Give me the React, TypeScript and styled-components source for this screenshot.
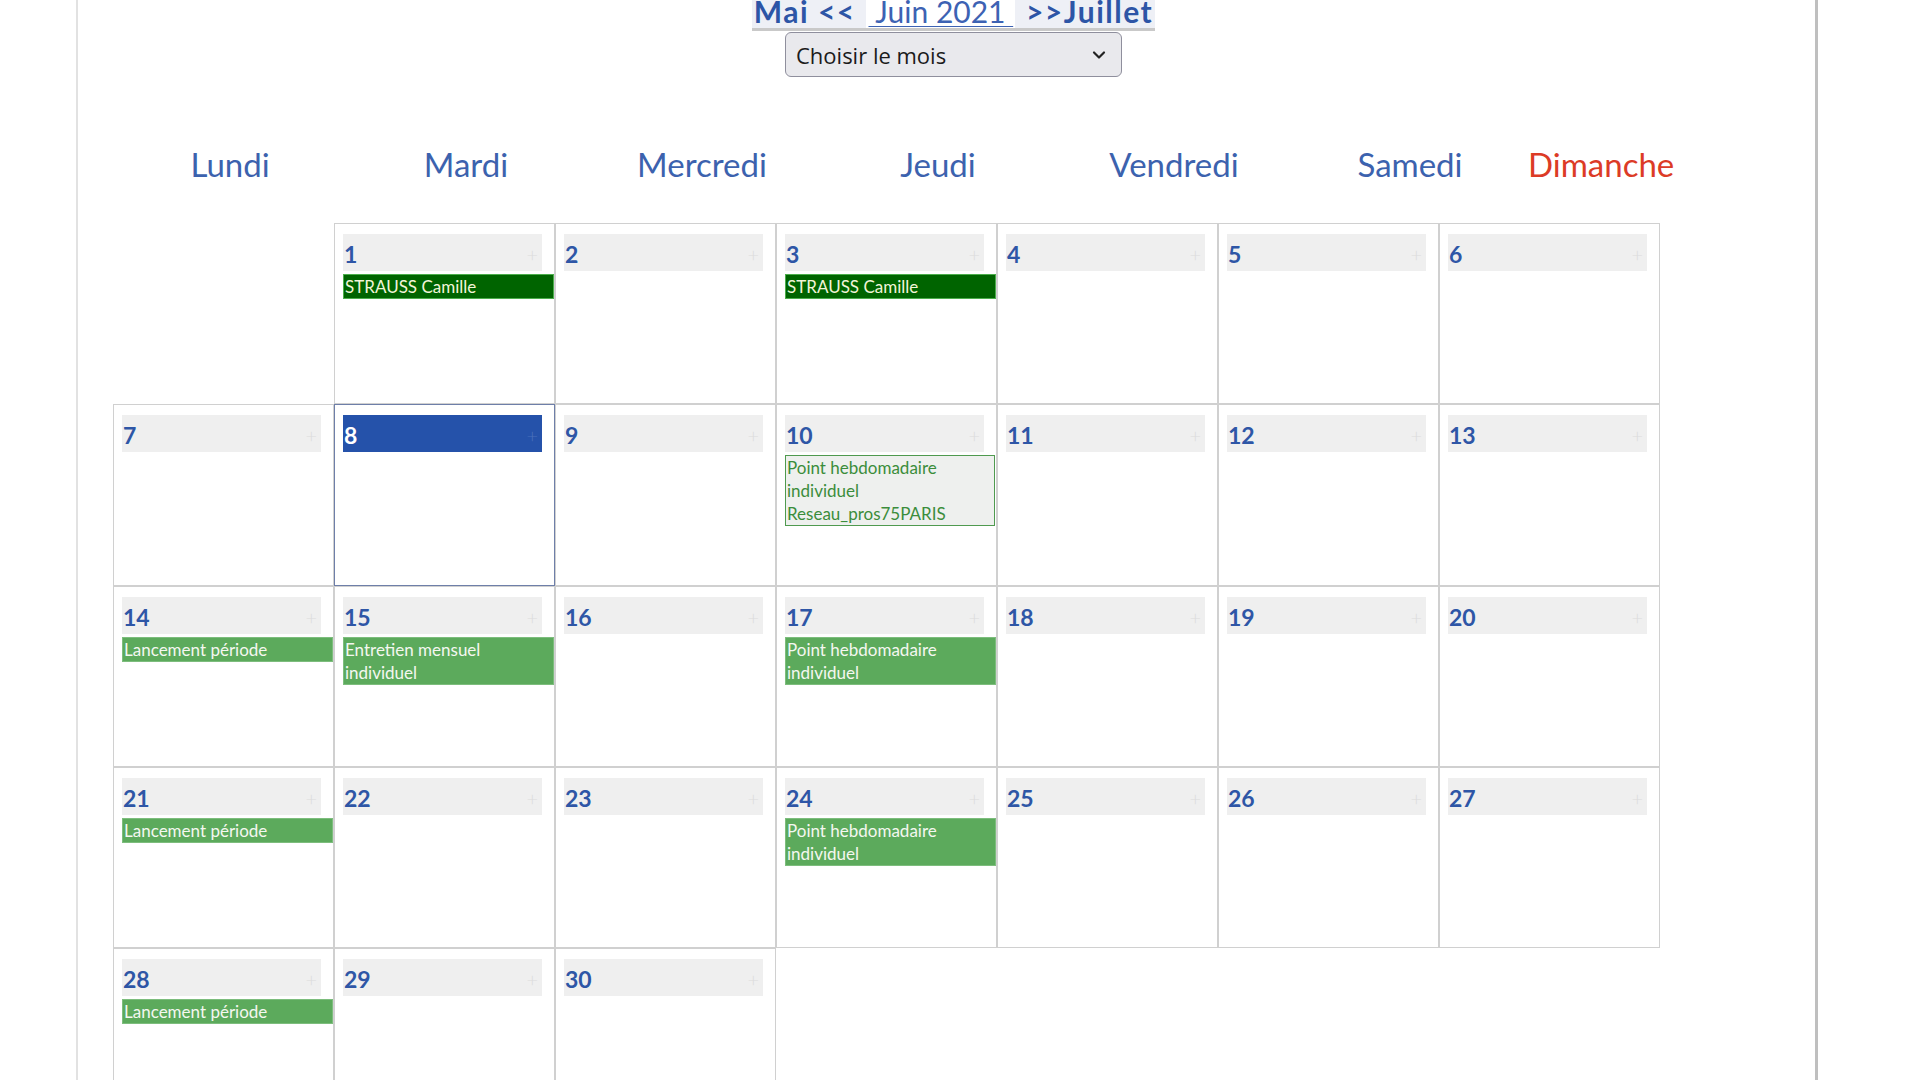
import styled, { createGlobalStyle } from "styled-components";
import { ChevronDown } from "lucide-react";

const GlobalStyle = createGlobalStyle`
  body {
    margin: 0;
    background: #ffffff;
    font-family: Lato, "Liberation Sans", sans-serif;
    overflow: hidden;
  }
`;

const Page = styled.div`
  box-sizing: border-box;
  margin-left: 76px;
  width: 1742px;
  min-height: 100vh;
  border-left: 2px solid #e2e2e2;
  border-right: 3px solid #bfbfbf;
`;

const Nav = styled.div`
  display: flex;
  flex-direction: column;
  align-items: center;
  padding-left: 14px;
  margin-top: -5px;
`;

const NavLine = styled.div`
  display: flex;
  border-bottom: 3px solid #c9c9c9;
  font-size: 30px;
  line-height: 1.1;
`;

const NavLink = styled.a<{ $current?: boolean }>`
  color: ${(p) => (p.$current ? "#3d62b3" : "#2d55a6")};
  font-weight: ${(p) => (p.$current ? 400 : 700)};
  letter-spacing: ${(p) => (p.$current ? "0" : "1.5px")};
  background: ${(p) => (p.$current ? "#ffffff" : "#eef0f6")};
  text-decoration: ${(p) => (p.$current ? "underline" : "none")};
  text-decoration-thickness: 1px;
  text-underline-offset: 3px;
  white-space: pre;
  padding: 0 2px;
`;

const SelectBox = styled.div`
  box-sizing: border-box;
  width: 337px;
  height: 45px;
  margin-top: 1px;
  display: flex;
  align-items: center;
  justify-content: space-between;
  padding: 0 12px 0 10px;
  background: #e9e9ed;
  border: 1px solid #8f8f9d;
  border-radius: 6px;
  font-family: "Open Sans", "Liberation Sans", sans-serif;
  font-size: 22px;
  color: #1b1b1b;
`;

const WeekHeader = styled.div`
  display: grid;
  grid-template-columns: repeat(7, 236px);
  margin: 59px 0 0 34px;
  height: 56px;
  align-items: center;
`;

const DayName = styled.div<{ $sunday?: boolean }>`
  font-size: 33px;
  text-align: ${(p) => (p.$sunday ? "left" : "center")};
  color: ${(p) => (p.$sunday ? "#dc3b26" : "#3c62ae")};
  white-space: nowrap;
`;

const Grid = styled.div`
  display: grid;
  grid-template-columns: repeat(7, 221px);
  grid-auto-rows: 181.3px;
  margin: 31px 0 0 35px;
`;

const Cell = styled.div<{ $today?: boolean }>`
  box-sizing: border-box;
  border: 1px solid ${(p) => (p.$today ? "#6e7fa9" : "#d0d0d0")};
  padding: 10px 12px 0 8px;
  display: flex;
  flex-direction: column;
  gap: 3px;
`;

const Blank = styled.div``;

const DayBar = styled.div<{ $today?: boolean }>`
  height: 37px;
  display: flex;
  align-items: center;
  justify-content: space-between;
  padding: 3px 4px 0 1px;
  box-sizing: border-box;
  background: ${(p) => (p.$today ? "#2552aa" : "#efefef")};
`;

const DayNum = styled.span<{ $today?: boolean }>`
  font-size: 23px;
  font-weight: 700;
  color: ${(p) => (p.$today ? "#ffffff" : "#2e56a6")};
`;

const Plus = styled.span<{ $today?: boolean }>`
  font-size: 20px;
  font-weight: 300;
  color: ${(p) => (p.$today ? "#4a70bb" : "#dcdcdc")};
`;

type Kind = "dark" | "light" | "outline";

const Event = styled.div<{ $kind: Kind }>`
  margin-right: ${(p) => (p.$kind === "outline" ? "-11px" : "-12px")};
  font-size: 17px;
  line-height: 23px;
  padding: 0 1px;
  border: 1px solid
    ${(p) => (p.$kind === "dark" ? "#4cae4c" : p.$kind === "light" ? "#7dbd7d" : "#4f9a4f")};
  background: ${(p) => (p.$kind === "dark" ? "#006400" : p.$kind === "light" ? "#5caa5c" : "#eef0ee")};
  color: ${(p) => (p.$kind === "dark" ? "#f2f5d8" : p.$kind === "light" ? "#f4f7f0" : "#3b8d3b")};
`;

interface IEvent {
  kind: Kind;
  lines: string[];
}

const events: Record<number, IEvent[]> = {
  1: [{ kind: "dark", lines: ["STRAUSS Camille"] }],
  3: [{ kind: "dark", lines: ["STRAUSS Camille"] }],
  10: [{ kind: "outline", lines: ["Point hebdomadaire", "individuel", "Reseau_pros75PARIS"] }],
  14: [{ kind: "light", lines: ["Lancement période"] }],
  15: [{ kind: "light", lines: ["Entretien mensuel", "individuel"] }],
  17: [{ kind: "light", lines: ["Point hebdomadaire", "individuel"] }],
  21: [{ kind: "light", lines: ["Lancement période"] }],
  24: [{ kind: "light", lines: ["Point hebdomadaire", "individuel"] }],
  28: [{ kind: "light", lines: ["Lancement période"] }],
};

const days = ["Lundi", "Mardi", "Mercredi", "Jeudi", "Vendredi", "Samedi", "Dimanche"];

const TODAY = 8;

function App() {
  const slots: (number | null)[] = [null];
  for (let d = 1; d <= 30; d++) slots.push(d);
  slots.push(null);

  return (
    <Page>
      <GlobalStyle />
      <Nav>
        <NavLine>
          <NavLink href="#">Mai &lt;&lt; </NavLink>
          <NavLink href="#" $current>
            {" Juin 2021 "}
          </NavLink>
          <NavLink href="#"> &gt;&gt;Juillet</NavLink>
        </NavLine>
        <SelectBox>
          <span>Choisir le mois</span>
          <ChevronDown size={20} strokeWidth={2.6} color="#222" />
        </SelectBox>
      </Nav>

      <WeekHeader>
        {days.map((d) => (
          <DayName key={d} $sunday={d === "Dimanche"}>
            {d}
          </DayName>
        ))}
      </WeekHeader>

      <Grid>
        {slots.map((day, i) =>
          day === null ? (
            <Blank key={`b${i}`} />
          ) : (
            <Cell key={day} $today={day === TODAY}>
              <DayBar $today={day === TODAY}>
                <DayNum $today={day === TODAY}>{day}</DayNum>
                <Plus $today={day === TODAY}>+</Plus>
              </DayBar>
              {(events[day] || []).map((ev, j) => (
                <Event key={j} $kind={ev.kind}>
                  {ev.lines.map((l) => (
                    <div key={l}>{l}</div>
                  ))}
                </Event>
              ))}
            </Cell>
          )
        )}
      </Grid>
    </Page>
  );
}

export default App;
